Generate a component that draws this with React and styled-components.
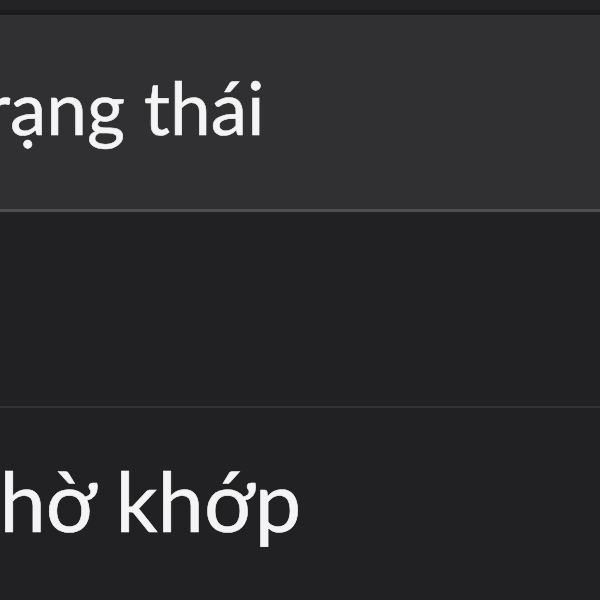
import React from 'react'
import styled, { createGlobalStyle } from 'styled-components'

const GlobalStyle = createGlobalStyle`
  html, body {
    margin: 0;
    padding: 0;
    background: #212123;
    overflow: hidden;
  }
`

const Tabla = styled.div`
  width: 600px;
  height: 600px;
  overflow: hidden;
  display: flex;
  flex-direction: column;
  font-family: Lato, Roboto, "Noto Sans", sans-serif;
  background: #212123;
`

const Borde = styled.div`
  height: 10px;
  background: #232326;
  border-bottom: 5px solid #1c1c1e;
  flex-shrink: 0;
`

const Fila = styled.div`
  flex-shrink: 0;
  height: ${props => props.$alto}px;
  display: flex;
  align-items: center;
  background: ${props => props.$cabecera ? '#303032' : '#212123'};
  border-bottom: ${props => props.$linea};
  box-sizing: border-box;
`

const Celda = styled.span`
  margin-left: ${props => props.$desde}px;
  padding-bottom: ${props => props.$subir}px;
  color: #f4f4f5;
  font-size: ${props => props.$tam}px;
  font-weight: 400;
  -webkit-text-stroke: 0.6px #f4f4f5;
  white-space: nowrap;
  line-height: 1;
`

const App = () => {
  return (
    <>
      <GlobalStyle />
      <Tabla>
        <Borde />
        <Fila $cabecera $alto={197} $linea="3px solid #4e4e50">
          <Celda $tam={73} $desde={-51} $subir={10}>Trạng thái</Celda>
        </Fila>
        <Fila $alto={196} $linea="2px solid #333335" />
        <Fila $alto={200} $linea="none">
          <Celda $tam={83} $desde={-56} $subir={16}>Chờ khớp</Celda>
        </Fila>
      </Tabla>
    </>
  )
}

export default App
